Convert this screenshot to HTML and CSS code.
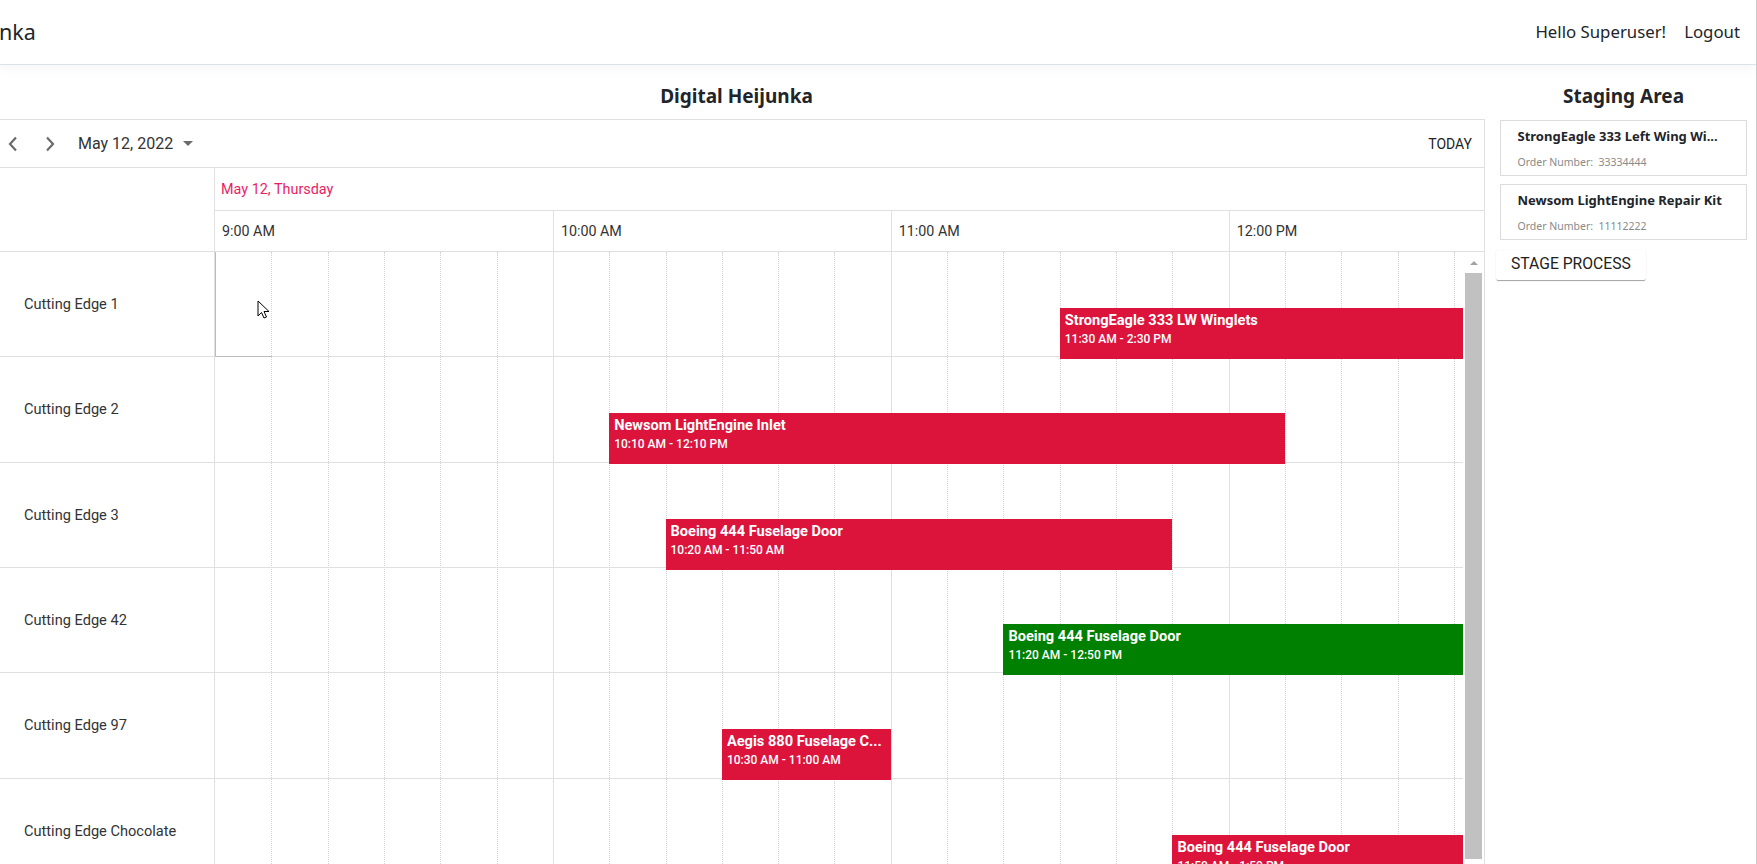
FILE: index.html
```html
<!DOCTYPE html>
<html lang="en">
<head>
<meta charset="utf-8">
<title>Digital Heijunka</title>
<link rel="stylesheet" href="styles.css">
</head>
<body>
<div class="page">
  <header class="navbar">
    <a class="brand">nka</a>
    <nav class="nav">
      <span class="nav-link">Hello Superuser!</span>
      <a class="nav-link">Logout</a>
    </nav>
  </header>

  <main class="main">
    <section class="cal-col">
      <h5 class="col-title">Digital Heijunka</h5>
      <div class="scheduler">
        <div class="toolbar">
          <span class="nav-btn"><svg width="10" height="16" viewBox="0 0 10 16"><polyline points="8,1.5 2,8 8,14.5" fill="none" stroke="#6b6b6b" stroke-width="2.2"/></svg></span>
          <span class="nav-btn"><svg width="10" height="16" viewBox="0 0 10 16"><polyline points="2,1.5 8,8 2,14.5" fill="none" stroke="#6b6b6b" stroke-width="2.2"/></svg></span>
          <span class="date-pick">May 12, 2022<span class="caret"></span></span>
          <span class="today">TODAY</span>
        </div>

        <div class="sched-head">
          <div class="res-head"></div>
          <div class="time-head">
            <div class="date-row">May 12, Thursday</div>
            <div class="hour-row">
              <div class="hour">9:00 AM</div>
              <div class="hour">10:00 AM</div>
              <div class="hour">11:00 AM</div>
              <div class="hour">12:00 PM</div>
            </div>
          </div>
        </div>

        <div class="sched-body">
          <div class="body-main">
            <div class="res-col">
              <div class="res-cell">Cutting Edge 1</div>
              <div class="res-cell">Cutting Edge 2</div>
              <div class="res-cell">Cutting Edge 3</div>
              <div class="res-cell">Cutting Edge 42</div>
              <div class="res-cell">Cutting Edge 97</div>
              <div class="res-cell">Cutting Edge Chocolate</div>
            </div>
            <div class="time-area">
              <div class="vlines">
                <i class="vl first"></i><i class="vl"></i><i class="vl"></i><i class="vl"></i><i class="vl"></i><i class="vl"></i>
                <i class="vl h"></i><i class="vl"></i><i class="vl"></i><i class="vl"></i><i class="vl"></i><i class="vl"></i>
                <i class="vl h"></i><i class="vl"></i><i class="vl"></i><i class="vl"></i><i class="vl"></i><i class="vl"></i>
                <i class="vl h"></i><i class="vl"></i><i class="vl"></i><i class="vl"></i><i class="vl"></i><i class="vl"></i>
              </div>
              <div class="trows">
                <div class="trow">
                  <div class="sel"></div>
                  <div class="ev" style="left:844.75px;width:1013.7px"><div class="ev-title">StrongEagle 333 LW Winglets</div><div class="ev-time">11:30 AM - 2:30 PM</div></div>
                  <svg class="cursor" width="13" height="20" viewBox="0 0 13 20"><path d="M1 1 L1 16 L4.5 12.5 L7 18 L9.5 17 L7 11.5 L12 11.5 Z" fill="#fff" stroke="#000" stroke-width="1" stroke-linejoin="round"/></svg>
                </div>
                <div class="trow">
                  <div class="ev" style="left:394.2px;width:675.8px"><div class="ev-title">Newsom LightEngine Inlet</div><div class="ev-time">10:10 AM - 12:10 PM</div></div>
                </div>
                <div class="trow">
                  <div class="ev" style="left:450.5px;width:506.9px"><div class="ev-title">Boeing 444 Fuselage Door</div><div class="ev-time">10:20 AM - 11:50 AM</div></div>
                </div>
                <div class="trow">
                  <div class="ev ev-green" style="left:788.4px;width:506.9px"><div class="ev-title">Boeing 444 Fuselage Door</div><div class="ev-time">11:20 AM - 12:50 PM</div></div>
                </div>
                <div class="trow">
                  <div class="ev" style="left:506.9px;width:168.9px"><div class="ev-title">Aegis 880 Fuselage C...</div><div class="ev-time">10:30 AM - 11:00 AM</div></div>
                </div>
                <div class="trow">
                  <div class="ev" style="left:957.4px;width:675.8px"><div class="ev-title">Boeing 444 Fuselage Door</div><div class="ev-time">11:50 AM - 1:50 PM</div></div>
                </div>
              </div>
            </div>
          </div>
          <div class="vscroll">
            <div class="vs-up"></div>
            <div class="vs-thumb"></div>
          </div>
        </div>
      </div>
    </section>

    <aside class="stage-col">
      <h5 class="col-title">Staging Area</h5>
      <div class="card first-card">
        <div class="card-title">StrongEagle 333 Left Wing Wi...</div>
        <div class="card-sub">Order Number:&nbsp; 33334444</div>
      </div>
      <div class="card">
        <div class="card-title">Newsom LightEngine Repair Kit</div>
        <div class="card-sub">Order Number:&nbsp; 11112222</div>
      </div>
      <button class="stage-btn">STAGE PROCESS</button>
    </aside>
  </main>
</div>
</body>
</html>
```

FILE: styles.css
```css
* { box-sizing: border-box; }

html, body {
  margin: 0;
  padding: 0;
  height: 864px;
  overflow: hidden;
  background: #fff;
}

body {
  font-family: "Noto Sans", "Open Sans", sans-serif;
  color: #212529;
}

.page {
  width: 1757px;
  height: 864px;
  border-right: 1px solid #c9c9c9;
  overflow: hidden;
}

/* ---------- top navbar ---------- */
.navbar {
  height: 65px;
  display: flex;
  align-items: center;
  justify-content: space-between;
  border-bottom: 1px solid #dbe3ea;
  box-shadow: 0 4px 12px rgba(0, 0, 0, 0.04);
  padding-right: 7px;
}

.brand {
  font-size: 21.5px;
  line-height: 30px;
  color: #212529;
  margin-left: -1px;
}

.nav { display: flex; }

.nav-link {
  font-size: 16.8px;
  line-height: 24px;
  padding: 0 9px;
  color: #212529;
}

/* ---------- main layout ---------- */
.main {
  display: flex;
  align-items: flex-start;
  width: 1756px;
}

.cal-col {
  flex: none;
  width: 1497px;
  min-width: 0;
  margin-left: -12px;
}

.col-title {
  margin: 0;
  height: 54px;
  padding-top: 19px;
  line-height: 24px;
  font-size: 19px;
  font-weight: 700;
  text-align: center;
  color: #212529;
  white-space: nowrap;
}

/* ---------- scheduler ---------- */
.scheduler {
  border: 1px solid #e0e0e0;
  font-family: Roboto, "Noto Sans", sans-serif;
  color: rgba(0, 0, 0, 0.87);
  overflow: hidden;
}

.toolbar {
  height: 48px;
  display: flex;
  align-items: center;
  padding: 0 12px 0 6px;
  border-bottom: 1px solid #e0e0e0;
}

.nav-btn {
  width: 36px;
  height: 36px;
  display: flex;
  align-items: center;
  justify-content: center;
}

.nav-btn + .nav-btn { margin-left: 1px; }

.date-pick {
  margin-left: 10px;
  font-size: 16px;
  display: flex;
  align-items: center;
  color: #333;
}

.caret {
  margin-left: 10px;
  width: 0;
  height: 0;
  border-left: 5.5px solid transparent;
  border-right: 5.5px solid transparent;
  border-top: 5px solid #6b6b6b;
}

.today {
  margin-left: auto;
  font-size: 14px;
  color: #222;
}

.sched-head {
  display: flex;
  border-bottom: 1px solid #e0e0e0;
}

.res-head {
  flex: 0 0 226px;
  border-right: 1px solid #e0e0e0;
}

.time-head {
  flex: 1 1 0;
  min-width: 0;
  overflow: hidden;
}

.date-row {
  height: 43px;
  border-bottom: 1px solid #e0e0e0;
  padding-left: 6px;
  display: flex;
  align-items: center;
  color: #e91e63;
  font-size: 14.4px;
}

.hour-row {
  display: flex;
  height: 40px;
}

.hour {
  flex: 0 0 337.9px;
  border-left: 1px solid #e0e0e0;
  padding-left: 7px;
  display: flex;
  align-items: center;
  font-size: 14.3px;
  color: #333;
  white-space: nowrap;
}

.hour:first-child { border-left: 0; }

.sched-body {
  display: flex;
  height: 640px;
}

.body-main {
  flex: 0 0 1474px;
  display: flex;
  overflow: hidden;
}

.res-col {
  flex: 0 0 226px;
  border-right: 1px solid #e0e0e0;
}

.res-cell {
  height: 105.33px;
  border-bottom: 1px solid #e0e0e0;
  display: flex;
  align-items: center;
  padding-left: 35px;
  font-size: 14.6px;
  color: #333;
  white-space: nowrap;
}

.time-area {
  flex: 1 1 0;
  min-width: 0;
  display: grid;
  grid-template-columns: minmax(0, 1fr);
}

.vlines, .trows { grid-area: 1 / 1; }

.vlines {
  display: flex;
  overflow: hidden;
}

.vl {
  flex: 0 0 56.3167px;
  border-left: 1px dotted #d2d2d2;
}

.vl.h { border-left: 1px solid #e0e0e0; }
.vl.first { border-left: 0; }

.trow {
  position: relative;
  height: 105.33px;
  border-bottom: 1px solid #e0e0e0;
}

.sel {
  position: absolute;
  left: 0;
  top: 0;
  bottom: -1px;
  width: 57px;
  border-left: 1px solid #bdbdbd;
  border-bottom: 1px solid #bdbdbd;
}

.cursor {
  position: absolute;
  left: 42px;
  top: 48px;
}

.ev {
  position: absolute;
  top: 56px;
  height: 51px;
  padding: 4px 5px 0 5px;
  background: #dc143c;
  color: #fff;
  overflow: hidden;
  white-space: nowrap;
}

.ev-green { background: #008000; }

.ev-title {
  font-size: 14.6px;
  font-weight: 700;
  line-height: 16px;
  overflow: hidden;
}

.ev-time {
  font-size: 12px;
  font-weight: 500;
  line-height: 15px;
  margin-top: 4px;
}

.vscroll {
  flex: 0 0 21px;
  padding-left: 2px;
}

.vs-up {
  width: 17px;
  height: 21px;
  display: flex;
  align-items: center;
  justify-content: center;
}

.vs-up::before {
  content: "";
  border-left: 4px solid transparent;
  border-right: 4px solid transparent;
  border-bottom: 4px solid #a3a3a3;
}

.vs-thumb {
  width: 17px;
  height: 586px;
  background: #c1c1c1;
}

/* ---------- staging area ---------- */
.stage-col {
  flex: 1 1 0;
  min-width: 0;
  padding: 0 9px 0 15px;
}

.card {
  height: 56px;
  border: 1px solid #dcdcdc;
  padding: 7px 12px 0 16.5px;
  margin-top: 8px;
}

.card.first-card { margin-top: 1px; }

.card-title {
  font-size: 13px;
  font-weight: 700;
  line-height: 17px;
  white-space: nowrap;
  overflow: hidden;
  color: #212529;
}

.card-sub {
  margin-top: 10px;
  font-size: 10.5px;
  line-height: 14px;
  color: #8a8a8a;
  white-space: nowrap;
}

.stage-btn {
  display: block;
  margin-top: 10px;
  margin-left: -4px;
  height: 30px;
  padding: 0 15px 3px 15px;
  border: 0;
  background: #fff;
  font-family: Roboto, sans-serif;
  font-size: 15.7px;
  color: #212121;
  box-shadow: 0 1px 1px rgba(0, 0, 0, 0.14), 0 2px 1px -1px rgba(0, 0, 0, 0.25), 0 0 1px rgba(0, 0, 0, 0.12);
  border-radius: 2px;
}
```
